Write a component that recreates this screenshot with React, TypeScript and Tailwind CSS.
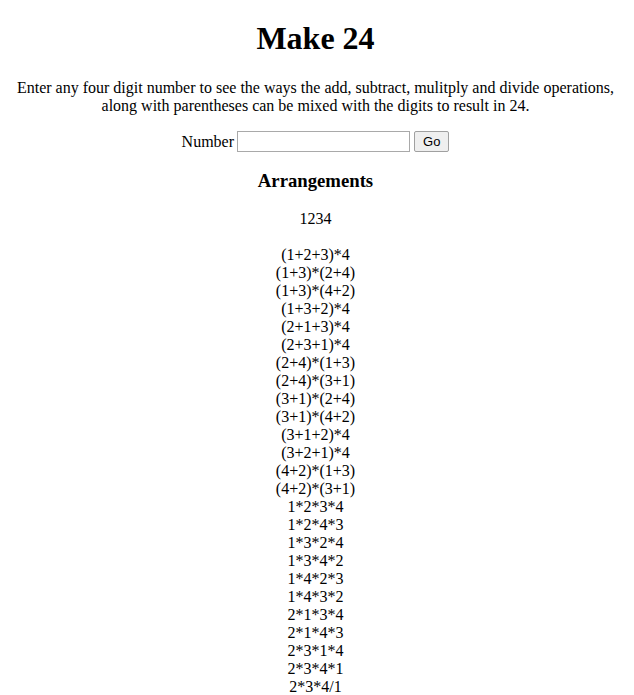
import React from "react";

const items = [
  "(1+2+3)*4",
  "(1+3)*(2+4)",
  "(1+3)*(4+2)",
  "(1+3+2)*4",
  "(2+1+3)*4",
  "(2+3+1)*4",
  "(2+4)*(1+3)",
  "(2+4)*(3+1)",
  "(3+1)*(2+4)",
  "(3+1)*(4+2)",
  "(3+1+2)*4",
  "(3+2+1)*4",
  "(4+2)*(1+3)",
  "(4+2)*(3+1)",
  "1*2*3*4",
  "1*2*4*3",
  "1*3*2*4",
  "1*3*4*2",
  "1*4*2*3",
  "1*4*3*2",
  "2*1*3*4",
  "2*1*4*3",
  "2*3*1*4",
  "2*3*4*1",
  "2*3*4/1",
  "2*4*1*3",
  "2*4*3*1",
  "2*4*3/1",
];

export default function App() {
  return (
    <div className="px-2 pr-[11px] text-center text-black bg-white" style={{ fontFamily: '"Liberation Serif", "Times New Roman", serif' }}>
      <div className="h-[19.5px]" />
      <h1 className="text-[32px] font-bold mb-[22.5px] leading-[37px]">Make 24</h1>
      <p className="text-[16px] mb-4 leading-[18px]">
        Enter any four digit number to see the ways the add, subtract, mulitply and divide operations, along with parentheses can be mixed with the digits to result in 24.
      </p>
      <div className="flex justify-center items-center text-[16px] leading-[18px]">
        <span>Number</span>
        <input
          type="text"
          className="ml-[3px] w-[173px] h-[21px] border border-[#a9a9a9] bg-white px-[2px] text-[13px]"
        />
        <button
          className="ml-[4px] h-[21px] px-[8px] border border-[#a0a0a0] bg-[#efefef] rounded-[2px] text-[13px] leading-[15px]"
          style={{ fontFamily: '"Liberation Sans", Arial, sans-serif' }}
        >
          Go
        </button>
      </div>
      <h3 className="text-[18.72px] font-bold mt-[17.7px] mb-[18.72px] leading-[22px]">Arrangements</h3>
      <p className="mb-[18px] leading-[18px]">1234</p>
      <div className="leading-[18px]">
        {items.map((s) => (
          <div key={s}>{s}</div>
        ))}
      </div>
    </div>
  );
}
